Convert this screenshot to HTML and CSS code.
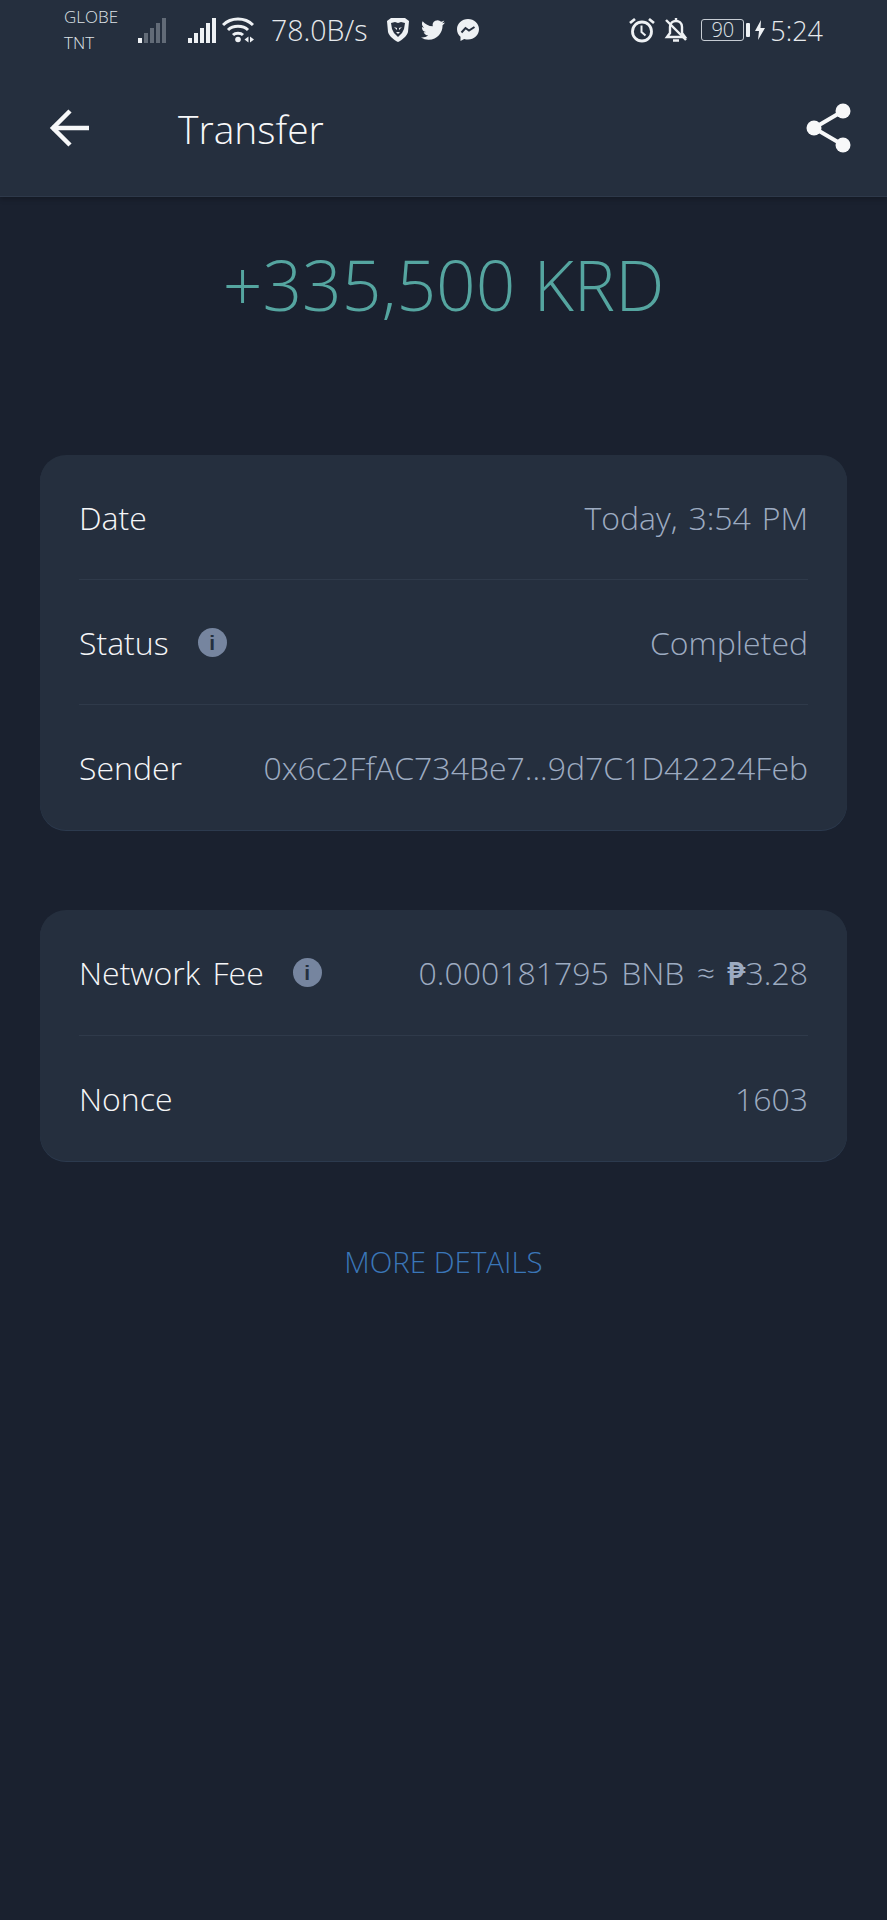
FILE: index.html
```html
<!DOCTYPE html>
<html lang="en">
<head>
  <meta charset="UTF-8" />
  <title>Transfer</title>
  <link rel="stylesheet" href="styles.css">
</head>
<body>

<header class="top">
  <div class="statusbar">
    <div class="carrier"><span>GLOBE</span><span>TNT</span></div>
    <svg class="sig" viewBox="0 0 28 25" width="28" height="25">
      <rect x="0" y="20" width="4" height="5" fill="#eef1f4"/>
      <rect x="6" y="15" width="4" height="10" fill="#626b77"/>
      <rect x="12" y="10" width="4" height="15" fill="#626b77"/>
      <rect x="18" y="5" width="4" height="20" fill="#626b77"/>
      <rect x="24" y="0" width="4" height="25" fill="#626b77"/>
    </svg>
    <svg class="sig sig-2" viewBox="0 0 28 25" width="28" height="25">
      <rect x="0" y="20" width="4" height="5" fill="#eef1f4"/>
      <rect x="6" y="15" width="4" height="10" fill="#eef1f4"/>
      <rect x="12" y="10" width="4" height="15" fill="#eef1f4"/>
      <rect x="18" y="5" width="4" height="20" fill="#eef1f4"/>
      <rect x="24" y="0" width="4" height="25" fill="#eef1f4"/>
    </svg>
    <svg class="wifi" viewBox="0 0 32 26" width="32" height="26" fill="none" stroke="#eef1f4" stroke-width="3">
      <path d="M1 8C9 0 23 0 31 8"/>
      <path d="M6 13C11 8 21 8 26 13"/>
      <path d="M11 18C13.500 15.500 18.500 15.500 21 18"/>
      <circle cx="16" cy="22.500" r="2.800" fill="#eef1f4" stroke="none"/>
      <path d="M26.500 19.500v6l-4-3zM28 19.500v6l4-3z" fill="#eef1f4" stroke="none"/>
    </svg>
    <span class="speed">78.0B/s</span>
    <svg class="app brave" viewBox="0 0 24 26" width="24" height="26">
      <path d="M5 1h14l4 3-1 11c-1 4-6 8-10 10C8 23 3 19 2 15L1 4z" fill="#eef1f4"/>
      <path d="M5 6l4-1 3 1 3-1 4 1-1 6-2 4-4 4-4-4-2-4z" fill="#27303f"/>
      <path d="M8 10l3 1v2zM16 10l-3 1v2zM10 15h4l-2 2z" fill="#eef1f4"/>
    </svg>
    <svg class="app bird" viewBox="0 0 24 24" width="24" height="24">
      <path fill="#eef1f4" d="M23.950 4.570a10 10 0 0 1-2.820.77 4.960 4.960 0 0 0 2.160-2.720c-.95.550-2 .96-3.130 1.190a4.920 4.920 0 0 0-8.380 4.480C7.690 8.100 4.070 6.130 1.640 3.160a4.820 4.820 0 0 0-.67 2.480c0 1.710.87 3.210 2.190 4.090a4.900 4.900 0 0 1-2.230-.61v.06a4.920 4.920 0 0 0 3.950 4.830 5 5 0 0 1-2.210.08 4.940 4.940 0 0 0 4.600 3.420A9.870 9.870 0 0 1 0 19.540a14 14 0 0 0 7.560 2.210c9.050 0 14-7.500 14-13.980 0-.21 0-.42-.02-.63a9.940 9.940 0 0 0 2.460-2.550z"/>
    </svg>
    <svg class="app msgr" viewBox="0 0 24 24" width="24" height="24">
      <path fill="#eef1f4" d="M12 1C5.900 1 1 5.500 1 11.200c0 3 1.300 5.600 3.500 7.500V23l3.700-2.100c1.200.4 2.500.6 3.800.6 6.100 0 11-4.500 11-10.300S18.100 1 12 1z"/>
      <path fill="none" stroke="#27303f" stroke-width="2" d="M5.500 14.500l4-4.500 3.500 2.500 5.500-3.500"/>
    </svg>
    <div class="status-right">
      <svg class="alarm" viewBox="0 0 26 26" width="26" height="26" fill="none" stroke="#eef1f4" stroke-width="2.800">
        <circle cx="13" cy="14.500" r="9.500"/>
        <path d="M12.500 8.500v6.500l4 3.500" stroke-width="2"/>
        <path d="M1 6l5-4M25 6l-5-4"/>
      </svg>
      <svg class="bell" viewBox="0 0 24 28" width="24" height="28" fill="none" stroke="#eef1f4" stroke-width="2.400">
        <path d="M3 21h18l-3-4v-6c0-4-3-6-6-6s-6 2-6 6v6z"/>
        <path d="M12 2v3M9 24.500h6"/>
        <path d="M2 4l20 20"/>
      </svg>
      <div class="battery"><span class="battery-body">90</span><span class="battery-tip"></span></div>
      <svg class="bolt" viewBox="0 0 10 20" width="10" height="20"><path fill="#eef1f4" d="M6 0L0 11h4l-1 9 7-12H5.500z"/></svg>
      <span class="clock">5:24</span>
    </div>
  </div>

  <div class="appbar">
    <svg class="back" viewBox="0 0 42 38" width="42" height="38" fill="none" stroke="#f7f8f9" stroke-width="4.500">
      <path d="M40 19H3"/>
      <path d="M21 2L4 19l17 17"/>
    </svg>
    <h1 class="title">Transfer</h1>
    <svg class="share" viewBox="0 0 45 50" width="45" height="50">
      <path d="M8 25L37 8M8 25l29 17" stroke="#f7f8f9" stroke-width="4" fill="none"/>
      <circle cx="37" cy="8" r="7.500" fill="#f7f8f9"/>
      <circle cx="8" cy="25" r="7.500" fill="#f7f8f9"/>
      <circle cx="37" cy="42" r="7.500" fill="#f7f8f9"/>
    </svg>
  </div>
</header>

<main class="content">
  <div class="amount">+335,500 KRD</div>

  <section class="card">
    <div class="row">
      <span class="label">Date</span>
      <span class="value">Today, 3:54 PM</span>
    </div>
    <div class="row">
      <span class="label">Status<i class="info">i</i></span>
      <span class="value">Completed</span>
    </div>
    <div class="row">
      <span class="label">Sender</span>
      <span class="value">0x6c2FfAC734Be7...9d7C1D42224Feb</span>
    </div>
  </section>

  <section class="card card-fee">
    <div class="row">
      <span class="label">Network Fee<i class="info">i</i></span>
      <span class="value value-fee">0.000181795 BNB ≈ <b class="peso">₱</b>3.28</span>
    </div>
    <div class="row">
      <span class="label">Nonce</span>
      <span class="value">1603</span>
    </div>
  </section>

  <a class="more" href="#">MORE DETAILS</a>
</main>

</body>
</html>
```

FILE: styles.css
```css
* {
  box-sizing: border-box;
}

html, body {
  height: 100%;
}

body {
  margin: 0;
  background-color: #1a212f;
  font-family: "Open Sans", "Noto Sans", sans-serif;
  font-weight: 300;
  color: #f2f4f6;
}

.top {
  height: 197px;
  background-color: #252f3e;
  border-bottom: 1px solid #2e394a;
  box-shadow: 0 2px 5px rgba(0, 0, 0, 0.25);
}

.statusbar {
  height: 60px;
  display: flex;
  align-items: center;
  padding: 0 64px;
}

.carrier {
  width: 74px;
  display: flex;
  flex-direction: column;
  font-size: 17px;
  line-height: 26px;
  color: #dfe3e7;
}

.sig-2 {
  margin-left: 22px;
}

.wifi {
  margin-left: 6px;
}

.speed {
  margin-left: 17px;
  font-size: 28.5px;
  color: #e6e9ec;
}

.brave {
  margin-left: 19px;
}

.bird {
  margin-left: 11px;
}

.msgr {
  margin-left: 11px;
}

.status-right {
  margin-left: auto;
  display: flex;
  align-items: center;
}

.bell {
  margin-left: 9px;
}

.battery {
  margin-left: 13px;
  display: flex;
  align-items: center;
}

.battery-body {
  width: 43px;
  height: 22px;
  border: 1px solid #c6ccd3;
  border-radius: 3px;
  font-size: 20px;
  line-height: 20px;
  text-align: center;
  color: #dfe3e7;
}

.battery-tip {
  width: 4px;
  height: 14px;
  margin-left: 2px;
  border-radius: 1px;
  background-color: #eef1f4;
}

.bolt {
  margin-left: 5px;
}

.clock {
  margin-left: 5px;
  font-size: 27px;
  color: #e6e9ec;
}

.appbar {
  height: 136px;
  display: flex;
  align-items: center;
  padding: 0 36px 0 49px;
}

.title {
  margin: 0 0 0 87px;
  font-size: 39px;
  font-weight: 300;
  color: #f7f8f9;
}

.share {
  margin-left: auto;
}

.content {
  padding: 0 40px;
  display: flex;
  flex-direction: column;
}

.amount {
  height: 258px;
  padding-top: 37px;
  text-align: center;
  font-size: 69.5px;
  line-height: 100px;
  color: #55a5a0;
}

.card {
  margin-bottom: 80px;
  padding: 0 39px;
  background-color: #252f3e;
  border-radius: 26px;
  box-shadow: 0 1px 0 #2c3a4e;
}

.row {
  height: 125px;
  display: flex;
  align-items: center;
  justify-content: space-between;
  border-bottom: 1px solid #2f3a4a;
}

.card-fee .row {
  height: 125.5px;
}

.row:last-child {
  border-bottom: none;
}

.label {
  display: flex;
  align-items: center;
  font-size: 32px;
  word-spacing: 4px;
  color: #f5f6f8;
}

.value {
  font-size: 32px;
  word-spacing: 2.5px;
  color: #9dabc1;
  white-space: nowrap;
}

.value-fee {
  word-spacing: 4px;
}

.peso {
  font-weight: 600;
}

.info {
  width: 29px;
  height: 29px;
  margin-left: 29px;
  border-radius: 50%;
  background-color: #76859f;
  color: #252f3e;
  font-family: "Liberation Sans", sans-serif;
  font-size: 21px;
  font-style: normal;
  font-weight: 700;
  line-height: 29px;
  text-align: center;
}

.more {
  margin-top: 0;
  text-align: center;
  font-size: 29.5px;
  color: #3a76b8;
  text-decoration: none;
}
```
